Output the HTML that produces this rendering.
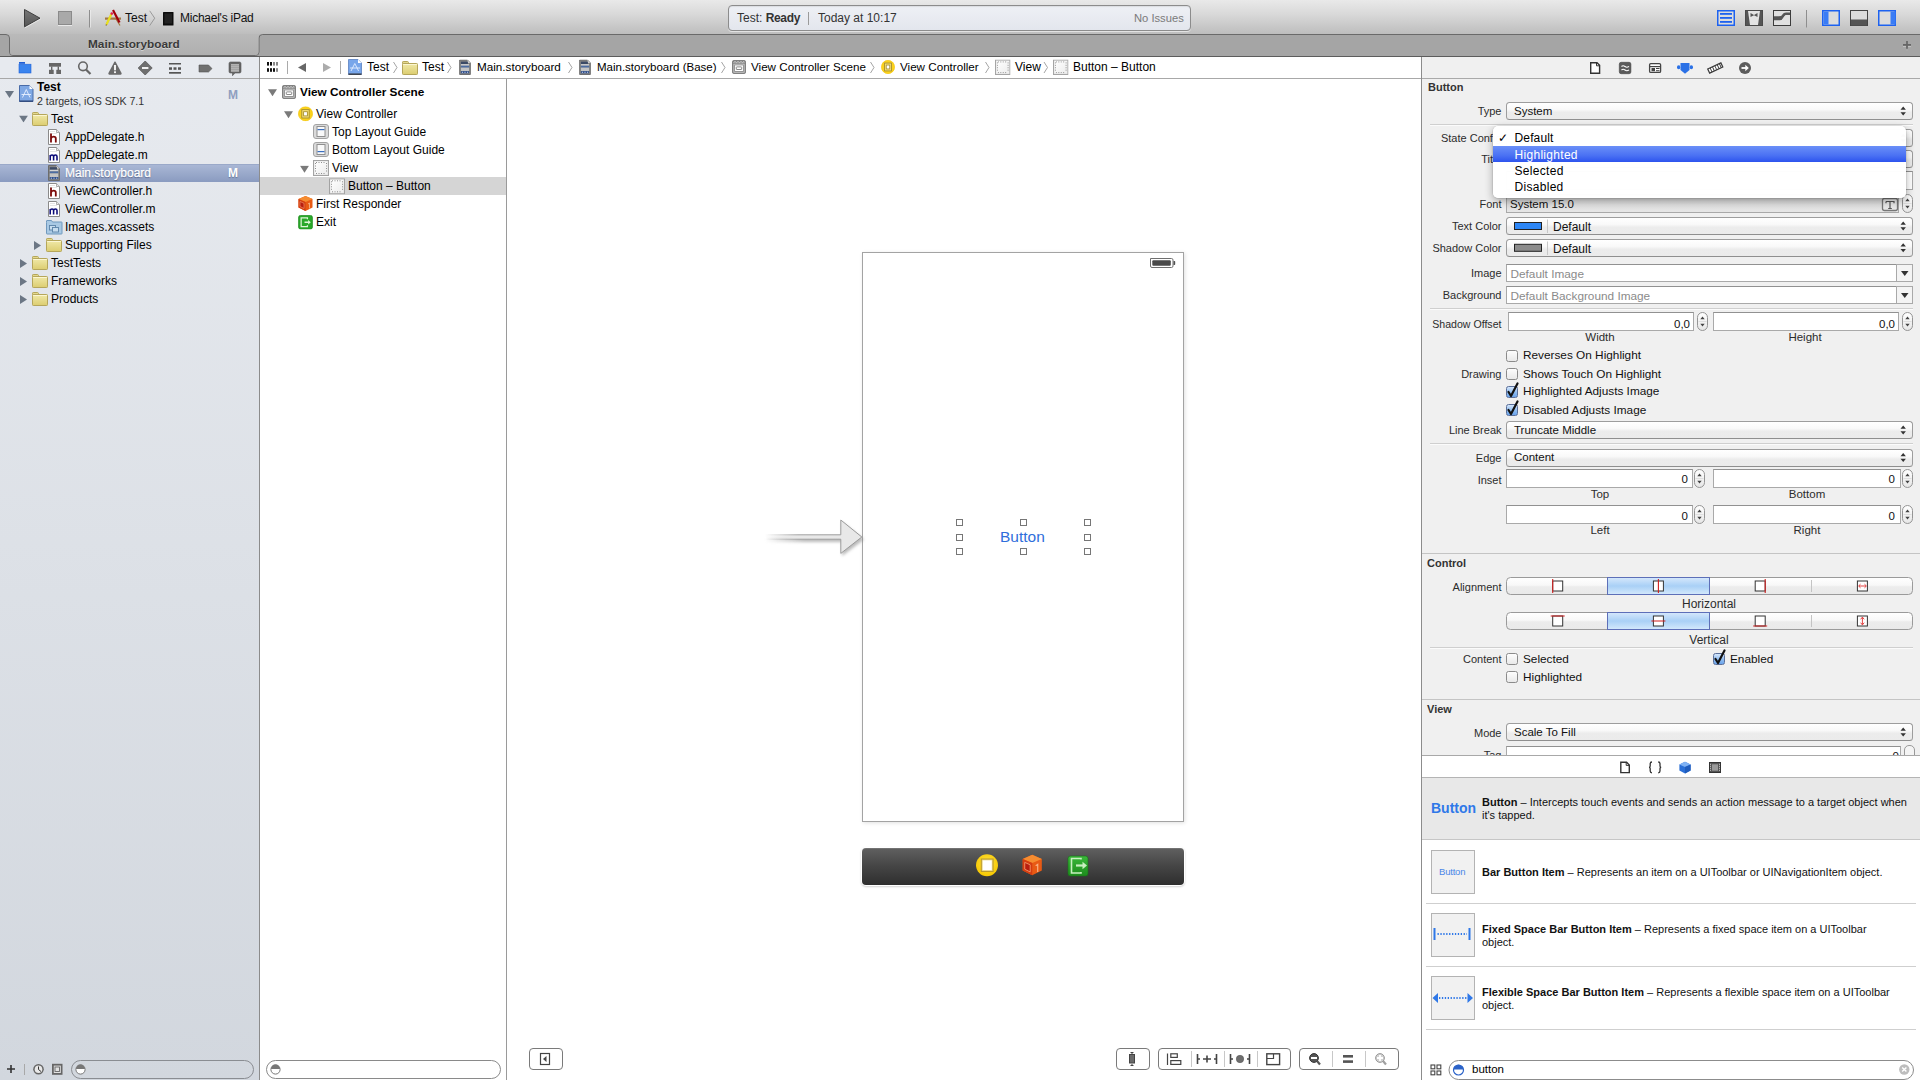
<!DOCTYPE html>
<html><head><meta charset="utf-8">
<style>
*{box-sizing:border-box;margin:0;padding:0}
html,body{width:1920px;height:1080px;overflow:hidden;background:#fff;font-family:"Liberation Sans",sans-serif;color:#000}
.a{position:absolute}
.t{position:absolute;white-space:nowrap;font-size:12px;line-height:12px}
.b{font-weight:bold}
#toolbar{left:0;top:0;width:1920px;height:35px;background:linear-gradient(#e9e9e9,#d9d9d9 40%,#bcbcbc)}
#tabbar{display:none}
#nav{left:0;top:57px;width:259px;height:1023px;background:linear-gradient(#e7eaef,#d2d7de)}
#navbar{left:0;top:57px;width:259px;height:22px;border-bottom:1px solid #a8a8a8;background:#e7eaef}
#vd1{left:259px;top:57px;width:1px;height:1023px;background:#8c8c8c}
#outline{left:260px;top:57px;width:246px;height:1023px;background:#fff}
#vd2{left:506px;top:79px;width:1px;height:1001px;background:#9a9a9a}
#jump{left:260px;top:57px;width:1161px;height:22px;background:#fff;border-bottom:1px solid #a8a8a8}
#canvas{left:507px;top:79px;width:914px;height:1001px;background:#fff}
#vd3{left:1421px;top:57px;width:1px;height:1023px;background:#8c8c8c}
#insp{left:1422px;top:57px;width:498px;height:1023px;background:#f0f0f0}

.lb{position:absolute;left:1422px;width:79.5px;text-align:right;white-space:nowrap;font-size:11px;line-height:11px;color:#2c2c2c;margin-top:.8px}
.pop{position:absolute;left:1506px;width:407px;height:18px;border:1px solid #9d9d9d;border-bottom-color:#8f8f8f;border-radius:3.5px;background:linear-gradient(#fff,#f9f9f9 40%,#ececec 58%,#ebebeb)}
.pt{position:absolute;white-space:nowrap;font-size:11.5px;line-height:11px;color:#111;margin-top:.6px}
.fld{position:absolute;background:#fff;border:1px solid #a9a9a9;border-top-color:#919191}
.ctr{position:absolute;text-align:center;white-space:nowrap;font-size:11.5px;line-height:11px;color:#2c2c2c}
.chk{position:absolute;width:12px;height:12px;border:1px solid #8b8b8b;border-radius:2.5px;background:linear-gradient(#fdfdfd,#e9e9e9)}
.chk.on{background:linear-gradient(#d4e6fb,#8fbcf0 55%,#6aa3ea);border-color:#5a6f9a}
.ct{position:absolute;white-space:nowrap;font-size:11.8px;line-height:12px;color:#111}
.hr{position:absolute;left:1430px;width:483px;height:2px;border-top:1px solid #cfcfcf;border-bottom:1px solid #fbfbfb}
.lt{position:absolute;white-space:nowrap;font-size:11px;line-height:13px;color:#111}
</style></head>
<body>

<svg width="0" height="0" style="position:absolute">
 <defs>
  <linearGradient id="fold" x1="0" y1="0" x2="0" y2="1"><stop offset="0" stop-color="#f0e9a8"/><stop offset="1" stop-color="#dccd70"/></linearGradient>
  <symbol id="folder" viewBox="0 0 16 14">
   <path d="M0.5 2.5 L0.5 1.2 Q0.5 0.5 1.2 0.5 L5.5 0.5 Q6.3 0.5 6.5 1.5 L6.7 2.5 Z" fill="#e4d98c" stroke="#b5a65a" stroke-width="1"/>
   <rect x="0.5" y="2.5" width="15" height="11" rx="0.8" fill="url(#fold)" stroke="#b5a65a" stroke-width="1"/>
   <line x1="1.2" y1="3.5" x2="14.8" y2="3.5" stroke="#fbf6d2" stroke-width="1"/>
  </symbol>
  <symbol id="doc" viewBox="0 0 12 16">
   <path d="M0.5 0.5 L8.5 0.5 L11.5 3.5 L11.5 15.5 L0.5 15.5 Z" fill="#fff" stroke="#8a8a8a" stroke-width="1"/>
   <path d="M8.5 0.5 L8.5 3.5 L11.5 3.5" fill="#e8e8e8" stroke="#9a9a9a" stroke-width=".8"/>
   <line x1="2" y1="2.5" x2="7" y2="2.5" stroke="#e4e4e4"/>
   <line x1="2" y1="4.5" x2="9" y2="4.5" stroke="#e4e4e4"/>
  </symbol>
  <symbol id="hdoc" viewBox="0 0 12 16">
   <use href="#doc" width="12" height="16"/>
   <path d="M3 4.5 L3 13.5 M3 9.5 Q3.5 7.6 5.6 7.6 Q7.8 7.6 7.8 9.5 L7.8 13.5" fill="none" stroke="#7c0a0a" stroke-width="1.8"/>
  </symbol>
  <symbol id="mdoc" viewBox="0 0 12 16">
   <use href="#doc" width="12" height="16"/>
   <path d="M2.2 8 L2.2 13.5 M2.2 9.6 Q2.6 8 4 8 Q5.6 8 5.6 9.6 L5.6 13.5 M5.6 9.6 Q6 8 7.4 8 Q9 8 9 9.6 L9 13.5" fill="none" stroke="#0a0a78" stroke-width="1.55"/>
  </symbol>
  <symbol id="sbdoc" viewBox="0 0 12 16">
   <path d="M0.5 0.5 L8.5 0.5 L11.5 3.5 L11.5 15.5 L0.5 15.5 Z" fill="#858585" stroke="#6c6c6c" stroke-width="1"/>
   <path d="M8.5 0.5 L8.5 3.5 L11.5 3.5 Z" fill="#d0d0d0"/>
   <rect x="1.8" y="2.2" width="7.2" height="2.6" fill="#3c4a66"/>
   <rect x="1.8" y="4.8" width="8.4" height="1.6" fill="#d4d4d4"/>
   <rect x="1.8" y="6.4" width="8.4" height="2" fill="#4c6ca2"/>
   <rect x="1.8" y="8.4" width="8.4" height="3.6" fill="#c4c4c4"/>
   <rect x="1.8" y="12" width="8.4" height="2.2" fill="#2f4f8e"/>
   <rect x="2.8" y="12.7" width="1" height=".9" fill="#fff"/><rect x="5.5" y="12.7" width="1" height=".9" fill="#fff"/><rect x="8.2" y="12.7" width="1" height=".9" fill="#fff"/>
  </symbol>
  <symbol id="tridown" viewBox="0 0 9 7"><path d="M0 0 L9 0 L4.5 7 Z" fill="#6b7684"/></symbol>
  <symbol id="triright" viewBox="0 0 7 9"><path d="M0 0 L7 4.5 L0 9 Z" fill="#6b7684"/></symbol>
  <symbol id="tridowng" viewBox="0 0 9 7"><path d="M0 0 L9 0 L4.5 7 Z" fill="#7a7a7a"/></symbol>

  <linearGradient id="vgrad" x1="0" y1="0" x2="1" y2="1"><stop offset="0" stop-color="#fff"/><stop offset="1" stop-color="#ececec"/></linearGradient>
  <symbol id="viewicon" viewBox="0 0 16 16">
   <rect x="0.5" y="0.5" width="15" height="15" fill="#e2e2e2" stroke="#a3a3a3" stroke-width="1"/>
   <rect x="1.5" y="1.5" width="13" height="13" fill="url(#vgrad)"/>
   <path d="M3 2.5 L13 2.5 M3 13.5 L13 13.5 M2.5 3 L2.5 13 M13.5 3 L13.5 13" fill="none" stroke="#8e8e8e" stroke-width="1" stroke-dasharray="1 1.5"/>
  </symbol>
  <symbol id="guide" viewBox="0 0 16 15">
   <rect x="0.5" y="0.5" width="15" height="14" rx="2.5" fill="#dadada" stroke="#a3a3a3" stroke-width="1"/>
   <rect x="4" y="2.5" width="8" height="10" fill="#f9f9f9" stroke="#8f8f8f" stroke-width="1"/>
  </symbol>
  <symbol id="vcicon" viewBox="0 0 15 15">
   <circle cx="7.5" cy="7.5" r="7.1" fill="#fbd21c" stroke="#f2c200" stroke-width=".6"/>
   <rect x="3.8" y="3.3" width="7.4" height="8.4" fill="#f7e27a" stroke="#a89130" stroke-width="1"/>
   <rect x="5.6" y="5.4" width="3.8" height="4.2" fill="#fff" stroke="#a89130" stroke-width=".9"/>
  </symbol>
  <symbol id="cube" viewBox="0 0 15 16">
   <path d="M7.5 0.5 L14.5 3.5 L14.5 12 L7.5 15.5 L0.5 12 L0.5 3.5 Z" fill="#e85a14"/>
   <path d="M0.5 3.5 L7.5 6.5 L14.5 3.5 L7.5 0.5 Z" fill="#f58c30"/>
   <path d="M0.5 3.5 L7.5 6.5 L7.5 15.5 L0.5 12 Z" fill="#d43c10"/>
   <path d="M2 6 L6 7.8 L6 13 L2 11 Z" fill="#b81e10" stroke="#f6a070" stroke-width=".6"/>
   <path d="M10 8.5 L11.5 7.5 L11.5 13" fill="none" stroke="#f9b080" stroke-width=".9"/>
  </symbol>
  <symbol id="exiticon" viewBox="0 0 15 15">
   <rect x="0.4" y="0.4" width="14.2" height="14.2" rx="2" fill="#2aa82a" stroke="#1a8a1a" stroke-width=".8"/>
   <path d="M9.5 4.3 L9.5 3 L3 3 L3 12 L9.5 12 L9.5 10.7" fill="none" stroke="#dff5d8" stroke-width="1.3"/>
   <path d="M6.5 7.5 L11 7.5" stroke="#dff5d8" stroke-width="1.3"/>
   <path d="M10.2 5.3 L13 7.5 L10.2 9.7 Z" fill="#dff5d8"/>
  </symbol>
  <symbol id="sceneicon" viewBox="0 0 14 14">
   <rect x="0.5" y="0.5" width="13" height="13" rx="1.2" fill="#858585" stroke="#707070" stroke-width=".8"/>
   <path d="M1.5 2.6 L3 1.6 L4.5 2.6 L6 1.6 L7.5 2.6 L9 1.6 L10.5 2.6 L12 1.6 L12.5 2.4" fill="none" stroke="#f0f0f0" stroke-width=".7"/>
   <rect x="1.5" y="3.8" width="11" height="8.8" fill="#d9d9d9"/>
   <rect x="2.6" y="4.9" width="8.8" height="6.6" fill="#fff" stroke="#8a8a8a" stroke-width=".9"/>
   <rect x="4.3" y="6.9" width="5.4" height="2.6" rx=".5" fill="#fff" stroke="#7d7d7d" stroke-width=".9"/>
  </symbol>
 </defs>
</svg>
<div id="toolbar" class="a"></div>
<div id="tabbar" class="a"></div>

<!-- TOOLBAR CONTENT -->
<svg class="a" style="left:0;top:0" width="300" height="34">
 <defs><linearGradient id="pg" x1="0" y1="0" x2="0" y2="1"><stop offset="0" stop-color="#777"/><stop offset="1" stop-color="#555"/></linearGradient></defs>
 <path d="M24.5 9.5 L40 18.2 L24.5 26.8 Z" fill="url(#pg)" stroke="#3e3e3e" stroke-width="1"/>
 <path d="M25 27.8 L40.5 19" stroke="#fff" stroke-opacity=".5" stroke-width="1"/>
 <rect x="58.5" y="11.5" width="13" height="13" fill="#a9a9a9" stroke="#8a8a8a" stroke-width="1"/>
 <line x1="58" y1="25.5" x2="72" y2="25.5" stroke="#fff" stroke-opacity=".6"/>
 <line x1="89.5" y1="10" x2="89.5" y2="27.5" stroke="#8e8e8e"/>
 <line x1="90.5" y1="10" x2="90.5" y2="27.5" stroke="#f4f4f4" stroke-opacity=".6"/>
 <!-- xcode icon -->
 <rect x="105" y="17.5" width="16" height="2.2" fill="#a37841"/>
 <path d="M106 25.5 L112 13" stroke="#7a5a30" stroke-width="1.2"/>
 <path d="M120 25.5 L116 19" stroke="#a37841" stroke-width="1.2"/>
 <path d="M106.5 24.5 L111.5 13.8" stroke="#e8e020" stroke-width="2.2"/>
 <circle cx="111.8" cy="13.6" r="1.3" fill="#e02050"/>
 <path d="M113 10 L119.5 22.5" stroke="#a0000a" stroke-width="2.2"/>
 <!-- chevron -->
 <path d="M149.7 10.8 L154.7 18.2 L149.7 25.6" fill="none" stroke="#8a8a8a" stroke-width=".8"/>
 <!-- ipad -->
 <rect x="163" y="12" width="10.5" height="13.5" rx="0.5" fill="#0c0c0c"/>
 <rect x="164.5" y="13.5" width="7.5" height="10" fill="#222"/>
</svg>
<div class="t" style="left:125px;top:12px;color:#111">Test</div>
<div class="t" style="left:180px;top:12px;color:#111;letter-spacing:-.25px">Michael's iPad</div>
<!-- activity viewer -->
<div class="a" style="left:728px;top:5px;width:463px;height:26px;border:1px solid #8c8c8c;border-radius:4px;background:linear-gradient(#eef0f5,#e3e6ed);box-shadow:0 1px 0 rgba(255,255,255,.55), inset 0 1px 1px rgba(0,0,0,.08)"></div>
<div class="t" style="left:737px;top:12px;color:#333">Test: <span class="b" style="letter-spacing:-.35px">Ready</span></div>
<div class="a" style="left:808px;top:12px;width:1px;height:13px;background:#9a9a9a"></div>
<div class="t" style="left:818px;top:12px;color:#333">Today at 10:17</div>
<div class="t" style="left:1134px;top:12px;color:#7a7a7a;font-size:11.2px">No Issues</div>
<svg class="a" style="left:1700px;top:0" width="220" height="34">
 <rect x="17.75" y="10.75" width="16.5" height="14.5" fill="#dcdcdc" stroke="#1d62f0" stroke-width="1.5"/>
 <rect x="20" y="13" width="12" height="1.8" fill="#1d62f0"/>
 <rect x="20" y="17" width="12" height="1.8" fill="#1d62f0"/>
 <rect x="20" y="21" width="12" height="1.8" fill="#1d62f0"/>
 <rect x="45.5" y="10.5" width="17" height="15" fill="#555" stroke="#4a4a4a"/>
 <path d="M48 11 L60 11 L58 25 L50 25 Z" fill="#e4e4e4"/>
 <path d="M50.5 13 L54 15 L57.5 13 L57.5 17 L54 15.2 L50.5 17 Z" fill="#555"/>
 <rect x="73.5" y="10.5" width="17" height="15" fill="#e0e0e0" stroke="#3c3c3c"/>
 <path d="M74 17 L79 17 Q82 17 83 15 Q84 13.3 86 13.3 L90 13.3 L90 15 L86.5 15 Q85 15 84 17 Q82 20.5 80 20.5 L74 20.5 Z" fill="#555"/>
 <path d="M74 20.5 L80 20.5 Q82 20.5 84 17 Q85 15 86.5 15 L90 15 L90 25 L74 25 Z" fill="#e0e0e0"/>
 <path d="M74 17 L79 17 Q82 17 83 15 Q84 13.3 86 13.3 L90 13.3" fill="none" stroke="#555" stroke-width="1.6"/>
 <path d="M74 21 L80 21 Q82 21 84 17.5 Q85 15.5 86.5 15.5" fill="none"/>
 <line x1="106.5" y1="10" x2="106.5" y2="27.5" stroke="#8e8e8e"/>
 <rect x="122.75" y="10.75" width="16.5" height="14.5" fill="#dcdcdc" stroke="#1d62f0" stroke-width="1.5"/>
 <rect x="123.5" y="11.5" width="5" height="13" fill="#3a7cf5"/>
 <rect x="150.5" y="10.5" width="17" height="15" fill="#dcdcdc" stroke="#444"/>
 <rect x="151" y="19.5" width="16" height="6" fill="#555"/>
 <rect x="178.75" y="10.75" width="16.5" height="14.5" fill="#dcdcdc" stroke="#1d62f0" stroke-width="1.5"/>
 <rect x="190.5" y="11.5" width="5" height="13" fill="#3a7cf5"/>
</svg>
<!-- TAB BAR CONTENT -->
<svg class="a" style="left:0;top:34px" width="1920" height="23">
 <defs><linearGradient id="atab" x1="0" y1="0" x2="0" y2="1"><stop offset="0" stop-color="#bababa"/><stop offset="1" stop-color="#afafaf"/></linearGradient></defs>
 <path d="M0 0 L0 22 L1920 22 L1920 0 Z" fill="#a5a5a5"/>
 <path d="M-1 0.5 L6 0.5 Q9.5 0.5 9.5 4 L9.5 18 Q9.5 21.5 13 21.5 L255.5 21.5 Q259 21.5 259 18 L259 4 Q259 0.5 262.5 0.5 L1921 0.5" fill="none" stroke="#6a6a6a" stroke-width="1"/>
 <path d="M6 0 Q10 0 10 4 L10 18 Q10 21 13 21 L255.5 21 Q258.5 21 258.5 18 L258.5 4 Q258.5 0 262.5 0 Z" fill="url(#atab)"/>
 <line x1="0" y1="22.5" x2="1920" y2="22.5" stroke="#5c5c5c"/>
 <path d="M1907 7 L1907 14.8 M1903 10.9 L1911 10.9" stroke="#666" stroke-width="1.7"/><path d="M1903 12.6 L1906 12.6 M1908 12.6 L1911 12.6 M1907 15.8 L1907 16.3" stroke="#fff" stroke-opacity=".35" stroke-width="1"/>
</svg>
<div class="t b" style="left:88px;top:38px;color:#3a3a3a;font-size:11.8px;text-shadow:0 1px 0 rgba(255,255,255,.45)">Main.storyboard</div>
<div id="nav" class="a"></div>
<div id="navbar" class="a"></div>

<!-- NAV BAR ICONS -->
<svg class="a" style="left:0;top:57px" width="259" height="21">
 <rect x="19" y="5" width="6" height="1.8" fill="#1e5fd6"/>
 <rect x="19" y="7.2" width="12" height="8.8" fill="#3a84ee" stroke="#1e62d8" stroke-width=".6"/>
 <rect x="49" y="6" width="12" height="3.7" fill="#666"/>
 <rect x="51" y="9.5" width="1.4" height="3.5" fill="#666"/><rect x="57.6" y="9.5" width="1.4" height="3.5" fill="#666"/>
 <rect x="49" y="12.8" width="4.7" height="4.2" fill="#666"/><rect x="56.3" y="12.8" width="4.7" height="4.2" fill="#666"/>
 <circle cx="83" cy="9.3" r="4.3" fill="none" stroke="#666" stroke-width="1.6"/>
 <path d="M86 12.5 L90.5 17" stroke="#666" stroke-width="2.2"/>
 <path d="M115 4.5 Q114.7 4.3 114.4 4.7 L108.3 16.3 Q108.2 17.6 109.3 17.8 L120.7 17.8 Q121.8 17.6 121.7 16.3 L115.6 4.7 Q115.3 4.3 115 4.5 Z" fill="#6a6a6a"/>
 <rect x="114.1" y="8" width="1.8" height="5.3" fill="#fff"/><rect x="114.1" y="14.3" width="1.8" height="1.8" fill="#fff"/>
 <path d="M145.2 4 L152.2 11 L145.2 18 L138.2 11 Z" fill="#6f6f6f" stroke="#5a5a5a" stroke-width=".8" stroke-linejoin="round"/>
 <rect x="142" y="10.1" width="6.4" height="1.8" fill="#fff"/>
 <rect x="169" y="6" width="12" height="1.5" fill="#555"/>
 <rect x="169" y="10.3" width="3" height="2.5" fill="#555"/><rect x="173.5" y="10.3" width="3" height="2.5" fill="#555"/><rect x="178" y="10.3" width="3" height="2.5" fill="#555"/>
 <rect x="169" y="15" width="12" height="1.7" fill="#555"/>
 <path d="M199 8 L208.5 8 L212 11.6 L208.5 15 L199 15 Z" fill="#707070" stroke="#555" stroke-width=".6"/>
 <path d="M230.5 5 L239.5 5 Q241 5 241 6.5 L241 14.5 Q241 16 239.5 16 L235 16 L232.5 18.7 L232.5 16 L230.5 16 Q229 16 229 14.5 L229 6.5 Q229 5 230.5 5 Z" fill="#666" stroke="#555" stroke-width=".6"/>
 <rect x="231" y="7.5" width="8" height=".9" fill="#fff"/><rect x="231" y="9.5" width="8" height=".9" fill="#fff"/><rect x="231" y="11.5" width="8" height=".9" fill="#fff"/><rect x="231" y="13.5" width="8" height=".9" fill="#fff"/>
</svg>
<!-- NAV TREE -->
<div class="a" style="left:0;top:164px;width:259px;height:18px;background:linear-gradient(#a9b7d5,#8a9bc0);border-top:1px solid #9aa9c9"></div>
<svg class="a" style="left:0;top:79px" width="259" height="240">
 <use href="#tridown" x="5" y="12" width="9" height="7"/>
 <path d="M19.5 6.5 L29.5 6.5 L33 10 L33 22.5 L19.5 22.5 Z" fill="#7fa8e4" stroke="#4a6ca8" stroke-width="1"/>
 <path d="M29.5 6.5 L29.5 10 L33 10 Z" fill="#fff"/>
 <rect x="19.5" y="21.5" width="13.5" height="1.2" fill="#2a4070"/>
 <path d="M22.5 18.5 L26.3 10.5 L30 18.5 M21.5 15.5 L31 15.5" stroke="#e8f0ff" stroke-width=".9" fill="none"/>
 <use href="#tridown" x="19" y="36.5" width="9" height="7"/>
 <use href="#folder" x="32" y="33" width="16" height="14"/>
 <use href="#hdoc" x="48" y="50" width="12" height="16"/>
 <use href="#mdoc" x="48" y="68" width="12" height="16"/>
 <use href="#sbdoc" x="48" y="86" width="12" height="16"/>
 <use href="#hdoc" x="48" y="104" width="12" height="16"/>
 <use href="#mdoc" x="48" y="122" width="12" height="16"/>
 <path d="M46.5 143.5 L46.5 142 Q46.5 141.5 47 141.5 L51.5 141.5 L52.5 143 L61.5 143 Q62 143 62 143.5 L62 154.5 Q62 155 61.5 155 L47 155 Q46.5 155 46.5 154.5 Z" fill="#a9c9e4" stroke="#6f98bd" stroke-width="1"/>
 <rect x="49.5" y="146.5" width="6" height="4.5" fill="#c7ddef" stroke="#5b83a8" stroke-width=".9"/>
 <rect x="52.5" y="148.5" width="6" height="4.5" fill="#c7ddef" stroke="#5b83a8" stroke-width=".9"/>
 <use href="#triright" x="34" y="162" width="7" height="9"/>
 <use href="#folder" x="46" y="159" width="16" height="14"/>
 <use href="#triright" x="20" y="180" width="7" height="9"/>
 <use href="#folder" x="32" y="177" width="16" height="14"/>
 <use href="#triright" x="20" y="198" width="7" height="9"/>
 <use href="#folder" x="32" y="195" width="16" height="14"/>
 <use href="#triright" x="20" y="216" width="7" height="9"/>
 <use href="#folder" x="32" y="213" width="16" height="14"/>
</svg>
<div class="t b" style="left:37px;top:81px;font-size:12px">Test</div>
<div class="t" style="left:37px;top:95px;font-size:10.6px;color:#333">2 targets, iOS SDK 7.1</div>
<div class="t b" style="left:228px;top:89px;font-size:12px;color:#8f9fc0">M</div>
<div class="t" style="left:51px;top:113px">Test</div>
<div class="t" style="left:65px;top:131px">AppDelegate.h</div>
<div class="t" style="left:65px;top:149px">AppDelegate.m</div>
<div class="t" style="left:65px;top:167px;color:#fff;text-shadow:0 1px 1px rgba(30,40,80,.6);-webkit-text-stroke:.25px #fff">Main.storyboard</div>
<div class="t b" style="left:228px;top:167px;font-size:12px;color:#fff;text-shadow:0 1px 1px rgba(40,50,80,.4)">M</div>
<div class="t" style="left:65px;top:185px">ViewController.h</div>
<div class="t" style="left:65px;top:203px">ViewController.m</div>
<div class="t" style="left:65px;top:221px">Images.xcassets</div>
<div class="t" style="left:65px;top:239px">Supporting Files</div>
<div class="t" style="left:51px;top:257px">TestTests</div>
<div class="t" style="left:51px;top:275px">Frameworks</div>
<div class="t" style="left:51px;top:293px">Products</div>
<div id="vd1" class="a"></div>
<div id="outline" class="a"></div>
<div id="jump" class="a"></div>

<!-- OUTLINE -->
<div class="a" style="left:260px;top:177px;width:246px;height:18px;background:#d5d5d5"></div>
<svg class="a" style="left:260px;top:79px" width="246" height="160">
 <use href="#tridowng" x="8" y="10" width="9" height="7.5"/>
 <use href="#sceneicon" x="22" y="6" width="14" height="14"/>
 <use href="#tridowng" x="24" y="32" width="9" height="7.5"/>
 <use href="#vcicon" x="38" y="27.3" width="15" height="15"/>
 <use href="#guide" x="53" y="45" width="16" height="15"/>
 <rect x="57.5" y="50" width="7" height="1.2" fill="#3a6fc0"/>
 <use href="#guide" x="53" y="63" width="16" height="15"/>
 <rect x="57.5" y="72" width="7" height="1.2" fill="#3a6fc0"/>
 <use href="#tridowng" x="40" y="86.5" width="9" height="7.5"/>
 <use href="#viewicon" x="53" y="81" width="16" height="16"/>
 <use href="#viewicon" x="69" y="99.3" width="16" height="16"/>
 <use href="#cube" x="38" y="116.5" width="15" height="16"/>
 <use href="#exiticon" x="38" y="136" width="15" height="14.5"/>
</svg>
<div class="t b" style="left:300px;top:86px;font-size:11.8px">View Controller Scene</div>
<div class="t" style="left:316px;top:108px">View Controller</div>
<div class="t" style="left:332px;top:126px">Top Layout Guide</div>
<div class="t" style="left:332px;top:144px">Bottom Layout Guide</div>
<div class="t" style="left:332px;top:162px">View</div>
<div class="t" style="left:348px;top:180px">Button – Button</div>
<div class="t" style="left:316px;top:198px">First Responder</div>
<div class="t" style="left:316px;top:216px">Exit</div>
<div id="vd2" class="a"></div>

<!-- JUMP BAR -->
<svg class="a" style="left:260px;top:57px" width="1161" height="21">
 <g transform="translate(-260,-57)">
 <rect x="267" y="62" width="2" height="3.6" fill="#111"/><rect x="270" y="62" width="2" height="3.6" fill="#111"/><rect x="273" y="62" width="2" height="3.6" fill="#888"/><rect x="276" y="62" width="2" height="3.6" fill="#888"/>
 <rect x="267" y="68.2" width="2" height="3.6" fill="#111"/><rect x="270" y="68.2" width="2" height="3.6" fill="#111"/><rect x="273" y="68.2" width="2" height="3.6" fill="#111"/><rect x="276" y="68.2" width="2" height="3.6" fill="#888"/>
 <line x1="287.5" y1="61" x2="287.5" y2="74" stroke="#aaa"/>
 <path d="M306 63 L306 72 L298 67.5 Z" fill="#676767"/>
 <path d="M323 63 L323 72 L331 67.5 Z" fill="#acacac"/>
 <line x1="340.5" y1="61" x2="340.5" y2="74" stroke="#aaa"/>
 <path d="M348.5 59.5 L358 59.5 L361.5 63 L361.5 74.5 L348.5 74.5 Z" fill="#78a6ea" stroke="#5a80c0" stroke-width=".8"/>
 <path d="M358 59.5 L358 63 L361.5 63 Z" fill="#fff"/>
 <rect x="348.5" y="73.5" width="13" height="1.3" fill="#333"/>
 <path d="M351 71 L354.8 63.5 L358.6 71 M350 68 L360 68" stroke="#e4eeff" stroke-width=".9" fill="none"/>
 <path d="M393.5 62 L397 67.5 L393.5 73" fill="none" stroke="#9a9a9a" stroke-width=".9"/>
 <use href="#folder" x="402" y="61" width="16" height="14"/>
 <path d="M447.5 62 L451 67.5 L447.5 73" fill="none" stroke="#9a9a9a" stroke-width=".9"/>
 <use href="#sbdoc" x="459" y="59.5" width="12" height="15.5"/>
 <path d="M568.5 62 L572 67.5 L568.5 73" fill="none" stroke="#9a9a9a" stroke-width=".9"/>
 <use href="#sbdoc" x="579" y="59.5" width="12" height="15.5"/>
 <path d="M721.5 62 L725 67.5 L721.5 73" fill="none" stroke="#9a9a9a" stroke-width=".9"/>
 <use href="#sceneicon" x="732" y="60" width="14" height="14"/>
 <path d="M870.5 62 L874 67.5 L870.5 73" fill="none" stroke="#9a9a9a" stroke-width=".9"/>
 <use href="#vcicon" x="881" y="60" width="14" height="14"/>
 <path d="M985.5 62 L989 67.5 L985.5 73" fill="none" stroke="#9a9a9a" stroke-width=".9"/>
 <use href="#viewicon" x="995" y="59.5" width="15.5" height="15.5"/>
 <path d="M1044 62 L1047.5 67.5 L1044 73" fill="none" stroke="#9a9a9a" stroke-width=".9"/>
 <use href="#viewicon" x="1053" y="59.5" width="15.5" height="15.5"/>
 </g>
</svg>
<div class="t" style="left:367px;top:61px">Test</div>
<div class="t" style="left:422px;top:61px">Test</div>
<div class="t" style="left:477px;top:61px;font-size:11.7px">Main.storyboard</div>
<div class="t" style="left:597px;top:61px;font-size:11.5px">Main.storyboard (Base)</div>
<div class="t" style="left:751px;top:61px;font-size:11.65px">View Controller Scene</div>
<div class="t" style="left:900px;top:61px;font-size:11.65px">View Controller</div>
<div class="t" style="left:1015px;top:61px">View</div>
<div class="t" style="left:1073px;top:61px">Button – Button</div>

<div id="canvas" class="a"></div>

<!-- CANVAS -->
<div class="a" style="left:862px;top:252px;width:322px;height:570px;background:#fff;border:1px solid #a3a3a3;box-shadow:1px 1px 4px rgba(0,0,0,.12)"></div>
<svg class="a" style="left:740px;top:240px" width="460" height="340">
 <defs>
  <linearGradient id="shaft" x1="0" y1="0" x2="1" y2="0"><stop offset="0" stop-color="#999" stop-opacity="0"/><stop offset=".35" stop-color="#999" stop-opacity=".9"/><stop offset="1" stop-color="#999"/></linearGradient>
  <linearGradient id="shaftf" x1="0" y1="0" x2="1" y2="0"><stop offset="0" stop-color="#e8e8e8" stop-opacity="0"/><stop offset=".3" stop-color="#e8e8e8"/><stop offset="1" stop-color="#e8e8e8"/></linearGradient>
  <linearGradient id="shadg" x1="765" y1="0" x2="865" y2="0" gradientUnits="userSpaceOnUse"><stop offset="0" stop-color="#777" stop-opacity="0"/><stop offset=".4" stop-color="#777"/><stop offset="1" stop-color="#777"/></linearGradient>
  <filter id="blur1" x="-20%" y="-50%" width="140%" height="200%"><feGaussianBlur stdDeviation="1.6"/></filter>
 </defs>
 <g transform="translate(-740,-240)">
  <path d="M1150.5 258.5 L1171.5 258.5 Q1173 258.5 1173 260 L1173 266 Q1173 267.5 1171.5 267.5 L1152 267.5 Q1150.5 267.5 1150.5 266 Z" fill="#fff" stroke="#6f6f6f" stroke-width="1"/>
  <rect x="1152.3" y="260.3" width="18.5" height="5.4" rx="1" fill="#4a4a4a"/>
  <path d="M1173.5 261 L1174.5 261 Q1175.2 261 1175.2 261.8 L1175.2 264.3 Q1175.2 265 1174.5 265 L1173.5 265 Z" fill="#505050"/>
  <g filter="url(#blur1)" opacity=".5">
   <path d="M766 537 L842 537 L842 522 L864 539.5 L842 556 L842 542 L766 542 Z" fill="url(#shadg)"/>
  </g>
  <path d="M765 534.8 L840.8 534.8 L840.8 520 L861.8 537 L840.8 553.4 L840.8 539.2 L765 539.2 Z" fill="url(#shaftf)"/>
  <path d="M765 534.8 L840.8 534.8 L840.8 520 L861.8 537 L840.8 553.4 L840.8 539.2 L765 539.2" fill="none" stroke="url(#shaft)" stroke-width="1"/>
  <g fill="#fff" stroke="#767676" stroke-width="1">
   <rect x="956.5" y="519.5" width="6" height="6"/><rect x="1020.5" y="519.5" width="6" height="6"/><rect x="1084.5" y="519.5" width="6" height="6"/>
   <rect x="956.5" y="534.5" width="6" height="6"/><rect x="1084.5" y="534.5" width="6" height="6"/>
   <rect x="956.5" y="548.5" width="6" height="6"/><rect x="1020.5" y="548.5" width="6" height="6"/><rect x="1084.5" y="548.5" width="6" height="6"/>
  </g>
 </g>
</svg>
<div class="t" style="left:1000px;top:529px;font-size:15.5px;line-height:15px;color:#2f6edb">Button</div>
<!-- dock -->
<div class="a" style="left:861px;top:847px;width:324px;height:39px;border-radius:5px;background:#fff;box-shadow:0 1px 2px rgba(0,0,0,.18)"></div>
<div class="a" style="left:862px;top:848px;width:322px;height:37px;border-radius:4px;background:linear-gradient(#606060,#474747 45%,#2e2e2e);box-shadow:inset 0 1px 0 rgba(255,255,255,.12)"></div>
<svg class="a" style="left:970px;top:850px" width="125" height="32">
 <defs><radialGradient id="yel" cx=".5" cy=".4" r=".6"><stop offset="0" stop-color="#ffe040"/><stop offset="1" stop-color="#f6c800"/></radialGradient>
 <linearGradient id="grn" x1="0" y1="0" x2="0" y2="1"><stop offset="0" stop-color="#3ab83a"/><stop offset="1" stop-color="#1d8c1d"/></linearGradient></defs>
 <circle cx="17" cy="15.3" r="11" fill="url(#yel)"/>
 <rect x="11.3" y="9" width="11.8" height="12.5" fill="#e8d27a" stroke="#b89a30" stroke-width="1"/>
 <rect x="12.6" y="10.3" width="9.2" height="9.9" fill="#fff"/>
 <use href="#cube" x="52" y="3.8" width="20.5" height="22.6"/>
 <rect x="98" y="6" width="20" height="20" rx="2.5" fill="url(#grn)" stroke="#176f17" stroke-width=".6"/>
 <path d="M111 9.5 L111 8.5 L101.5 8.5 L101.5 23 L111 23 L111 22" fill="none" stroke="#c8efc0" stroke-width="1.6"/>
 <path d="M106 15.5 L113 15.5" stroke="#c8efc0" stroke-width="2.2"/>
 <path d="M112.5 11.8 L117 15.5 L112.5 19.2 Z" fill="#c8efc0"/>
</svg>
<!-- canvas bottom bar -->
<svg class="a" style="left:507px;top:1040px" width="914" height="40">
 <g transform="translate(-507,-1040)" fill="none" stroke="#7a7a7a" stroke-width="1">
  <rect x="529.5" y="1048.5" width="33" height="21" rx="3.5" fill="#fff"/>
  <rect x="540.5" y="1053.5" width="9" height="11" stroke="#444" stroke-width="1.2"/>
  <path d="M546.5 1056 L546.5 1062 L543 1059 Z" fill="#444" stroke="none"/>
  <rect x="1116.5" y="1048.5" width="33" height="21" rx="3.5" fill="#fff"/>
  <rect x="1129.5" y="1054.5" width="5" height="8.5" fill="#6a6a6a" stroke="#444"/>
  <path d="M1130 1052 L1134 1052 L1132 1054 Z M1130 1066 L1134 1066 L1132 1064 Z" fill="#444" stroke="none"/>
  <rect x="1158.5" y="1048.5" width="132" height="21" rx="3.5" fill="#fff"/>
  <path d="M1191.5 1051 L1191.5 1067 M1224.5 1051 L1224.5 1067 M1257.5 1051 L1257.5 1067" stroke="#c8c8c8"/>
  <path d="M1167.5 1053.5 L1167.5 1065" stroke="#444" stroke-width="1.2"/>
  <rect x="1170.8" y="1053.8" width="6.5" height="3.6" stroke="#444" stroke-width="1.2"/>
  <rect x="1170.8" y="1060.6" width="10" height="3.8" stroke="#444" stroke-width="1.2"/>
  <path d="M1197.5 1054 L1197.5 1064 M1216.5 1054 L1216.5 1064 M1197.5 1059 L1200 1059 M1203 1059 L1211 1059 M1214 1059 L1216.5 1059 M1207 1055.5 L1207 1062.5" stroke="#444" stroke-width="1.6"/>
  <path d="M1230.5 1054 L1230.5 1064 M1249.5 1054 L1249.5 1064 M1230.5 1059 L1233 1059 M1247 1059 L1249.5 1059" stroke="#444" stroke-width="1.6"/>
  <circle cx="1240" cy="1059" r="3.7" fill="#6e6e6e" stroke="#555" stroke-width=".6"/>
  <rect x="1266.8" y="1053.8" width="12.8" height="10.8" stroke="#444" stroke-width="1.4"/>
  <path d="M1267 1058.5 L1273.5 1058.5 L1273.5 1054" stroke="#444" stroke-width="1.2"/>
  <rect x="1299.5" y="1048.5" width="99" height="21" rx="3.5" fill="#fff"/>
  <path d="M1332.5 1051 L1332.5 1067 M1365.5 1051 L1365.5 1067" stroke="#c8c8c8"/>
  <circle cx="1314" cy="1058" r="4.4" fill="#555" stroke="#333" stroke-width="1"/>
  <rect x="1311" y="1057" width="6" height="2" fill="#fff" stroke="none"/>
  <path d="M1317 1061 L1320 1064.5" stroke="#555" stroke-width="2.2"/>
  <rect x="1343" y="1055" width="10" height="2.6" fill="#555" stroke="none"/>
  <rect x="1343" y="1060.3" width="10" height="2.6" fill="#555" stroke="none"/>
  <circle cx="1380" cy="1058" r="4.4" fill="#d0d0d0" stroke="#9a9a9a" stroke-width="1"/>
  <path d="M1377 1058 L1383 1058 M1380 1055 L1380 1061" stroke="#fff" stroke-width="1.8"/>
  <path d="M1383 1061 L1386 1064.5" stroke="#a0a0a0" stroke-width="2.2"/>
 </g>
</svg>
<!-- nav bottom bar -->
<svg class="a" style="left:0;top:1055px" width="506" height="25">
 <g transform="translate(0,-1055)">
  <path d="M11 1065 L11 1073 M7 1069 L15 1069" stroke="#333" stroke-width="1.6"/>
  <line x1="24.5" y1="1064" x2="24.5" y2="1075" stroke="#a8a8a8"/>
  <circle cx="38.5" cy="1069.2" r="5.3" fill="#666"/><circle cx="38.5" cy="1069.2" r="3.8" fill="#e8e8e8"/>
  <path d="M38.5 1066.5 L38.5 1069.5 L41 1071.5" stroke="#333" stroke-width="1" fill="none"/>
  <rect x="52" y="1063.8" width="10.5" height="11" fill="#666"/>
  <rect x="53.8" y="1065.6" width="7" height="7.4" fill="#e2e2e2"/>
  <rect x="55" y="1067" width="4.5" height="4.5" fill="none" stroke="#666" stroke-width=".9"/>
  <rect x="71.5" y="1060.5" width="182" height="18" rx="9" fill="none" stroke="#8a8d92" stroke-width="1"/>
  <circle cx="80.5" cy="1069.5" r="4.6" fill="#fff" stroke="#777" stroke-width="1"/>
  <path d="M76 1069 A4.5 4.5 0 0 1 85 1069 Z" fill="#777"/>
  <rect x="266.5" y="1060.5" width="234" height="18" rx="9" fill="#fff" stroke="#8a8a8a" stroke-width="1"/>
  <circle cx="275.5" cy="1069.5" r="4.6" fill="#fff" stroke="#777" stroke-width="1"/>
  <path d="M271 1069 A4.5 4.5 0 0 1 280 1069 Z" fill="#777"/>
 </g>
</svg>
<div id="vd3" class="a"></div>
<div id="insp" class="a"></div>

<!-- INSPECTOR -->
<div class="a" style="left:1422px;top:78px;width:498px;height:1px;background:#a9a9a9"></div>
<svg class="a" style="left:1580px;top:57px" width="180" height="21">
 <g transform="translate(-1580,-57)">
  <path d="M1590.7 62.7 L1597 62.7 L1599.6 65.3 L1599.6 73.2 L1590.7 73.2 Z" fill="#fff" stroke="#333" stroke-width="1.4"/>
  <path d="M1596.5 63 L1596.5 65.8 L1599.3 65.8" fill="none" stroke="#333" stroke-width="1"/>
  <rect x="1619.3" y="62.3" width="11.6" height="11.4" rx="1.8" fill="#5a5a5a" stroke="#444" stroke-width=".6"/>
  <path d="M1621.5 66.5 Q1623 65 1625 66.5 Q1627 68 1629 66.3 M1621.5 70 Q1623 68.5 1625 70 Q1627 71.5 1629 69.8" fill="none" stroke="#fff" stroke-width="1.1"/>
  <rect x="1649.6" y="63.6" width="11" height="8.8" rx="1.2" fill="#fff" stroke="#444" stroke-width="1.3"/>
  <rect x="1650" y="66" width="10.3" height="1.2" fill="#444"/>
  <rect x="1651.5" y="68" width="3.5" height="3.2" fill="#444"/>
  <rect x="1656" y="68" width="3.5" height="1" fill="#444"/><rect x="1656" y="70.2" width="3.5" height="1" fill="#444"/>
  <path d="M1680.5 63 L1689.5 63 L1689.5 70 L1685 73.8 L1680.5 70 Z" fill="#2b71e6"/>
  <path d="M1679.5 65.5 L1677 67.2 L1679.5 69 Z M1690.5 65.5 L1693 67.2 L1690.5 69 Z" fill="#2b71e6"/>
  <ellipse cx="1678.6" cy="67.2" rx="1.6" ry="2" fill="#2b71e6"/><ellipse cx="1691.4" cy="67.2" rx="1.6" ry="2" fill="#2b71e6"/>
  <g transform="rotate(-25 1715 68)"><rect x="1708" y="65.8" width="14.5" height="4.6" fill="#fff" stroke="#3a3a3a" stroke-width="1.2"/>
  <path d="M1710.6 66 L1710.6 70.2 M1713.2 66 L1713.2 70.2 M1715.8 66 L1715.8 70.2 M1718.4 66 L1718.4 70.2 M1720.8 66 L1720.8 70.2" stroke="#3a3a3a" stroke-width=".9"/></g>
  <circle cx="1745" cy="68" r="6" fill="#5c5c5c"/>
  <path d="M1741.5 68 L1746.5 68" stroke="#fff" stroke-width="1.8"/>
  <path d="M1745.3 64.8 L1748.8 68 L1745.3 71.2 Z" fill="#fff"/>
 </g>
</svg>
<div class="t b" style="left:1428px;top:82px;font-size:11px;line-height:11px;color:#333">Button</div>
<div class="lb" style="top:105.3px">Type</div>
<div class="pop" style="top:102px"></div>
<div class="pt" style="left:1514px;top:105.5px">System</div>
<div class="hr" style="top:124px"></div>
<div class="lb" style="top:132.6px">State Config</div>
<div class="pop" style="top:129px;height:18px"></div>
<div class="lb" style="top:153.2px">Title</div>
<div class="pop" style="top:150px;height:18px"></div>
<div class="fld" style="left:1506px;top:171px;width:407px;height:19px"></div>
<div class="lb" style="top:198.5px">Font</div>
<div class="fld" style="left:1506px;top:194px;width:393px;height:19px;background:linear-gradient(#c9c9c9,#dedede 40%,#e6e6e6)"></div>
<div class="pt" style="left:1510px;top:198.6px">System 15.0</div>
<div class="lb" style="top:220.4px">Text Color</div>
<div class="pop" style="top:217px"></div>
<div class="pt" style="left:1553px;top:220.4px;font-size:12px;line-height:12px">Default</div>
<div class="lb" style="top:242.4px">Shadow Color</div>
<div class="pop" style="top:239px"></div>
<div class="pt" style="left:1553px;top:242.4px;font-size:12px;line-height:12px">Default</div>
<div class="lb" style="top:267.7px">Image</div>
<div class="fld" style="left:1506px;top:264px;width:407px;height:18px"></div>
<div class="pt" style="left:1510.5px;top:267.4px;color:#8a8a8a;font-size:11.8px;line-height:12px">Default Image</div>
<div class="lb" style="top:289.6px">Background</div>
<div class="fld" style="left:1506px;top:286px;width:407px;height:18px"></div>
<div class="pt" style="left:1510.5px;top:289.3px;color:#8a8a8a;font-size:11.8px;line-height:12px">Default Background Image</div>
<div class="hr" style="top:308px"></div>
<div class="lb" style="top:318.3px;font-size:10.6px">Shadow Offset</div>
<div class="fld" style="left:1508px;top:312px;width:186px;height:19px"></div>
<div class="fld" style="left:1713px;top:312px;width:186px;height:19px"></div>
<div class="pt" style="left:1672px;top:318.2px;width:18px;text-align:right">0,0</div>
<div class="pt" style="left:1877px;top:318.2px;width:18px;text-align:right">0,0</div>
<div class="ctr" style="left:1560px;width:80px;top:331.8px">Width</div>
<div class="ctr" style="left:1765px;width:80px;top:331.8px">Height</div>
<div class="chk" style="left:1506px;top:350px"></div>
<div class="ct" style="left:1523px;top:349.4px">Reverses On Highlight</div>
<div class="lb" style="top:368.5px">Drawing</div>
<div class="chk" style="left:1506px;top:368px"></div>
<div class="ct" style="left:1523px;top:367.7px">Shows Touch On Highlight</div>
<div class="chk on" style="left:1506px;top:386px"></div>
<div class="ct" style="left:1523px;top:385.4px">Highlighted Adjusts Image</div>
<div class="chk on" style="left:1506px;top:404px"></div>
<div class="ct" style="left:1523px;top:403.6px">Disabled Adjusts Image</div>
<div class="lb" style="top:424.5px">Line Break</div>
<div class="pop" style="top:421px"></div>
<div class="pt" style="left:1514px;top:424.4px">Truncate Middle</div>
<div class="hr" style="top:443px"></div>
<div class="lb" style="top:451.8px">Edge</div>
<div class="pop" style="top:448.5px"></div>
<div class="pt" style="left:1514px;top:451.8px">Content</div>
<div class="lb" style="top:473.9px">Inset</div>
<div class="fld" style="left:1506px;top:469px;width:187px;height:19px"></div>
<div class="fld" style="left:1713px;top:469px;width:188px;height:19px"></div>
<div class="pt" style="left:1670px;top:473.9px;width:18px;text-align:right">0</div>
<div class="pt" style="left:1877px;top:473.9px;width:18px;text-align:right">0</div>
<div class="ctr" style="left:1560px;width:80px;top:488.5px">Top</div>
<div class="ctr" style="left:1767px;width:80px;top:488.5px">Bottom</div>
<div class="fld" style="left:1506px;top:505px;width:187px;height:19px"></div>
<div class="fld" style="left:1713px;top:505px;width:188px;height:19px"></div>
<div class="pt" style="left:1670px;top:510.4px;width:18px;text-align:right">0</div>
<div class="pt" style="left:1877px;top:510.4px;width:18px;text-align:right">0</div>
<div class="ctr" style="left:1560px;width:80px;top:524.6px">Left</div>
<div class="ctr" style="left:1767px;width:80px;top:524.6px">Right</div>
<div class="a" style="left:1422px;top:553px;width:498px;height:1px;background:#c4c4c4"></div>
<div class="t b" style="left:1427px;top:557.6px;font-size:11px;line-height:11px;color:#333">Control</div>
<div class="lb" style="top:581.1px">Alignment</div>
<div class="ctr" style="left:1669px;width:80px;top:599.2px;font-size:12px">Horizontal</div>
<div class="ctr" style="left:1669px;width:80px;top:634.6px;font-size:12px">Vertical</div>
<div class="hr" style="top:646.5px"></div>
<div class="lb" style="top:653.2px">Content</div>
<div class="chk" style="left:1506px;top:653px"></div>
<div class="ct" style="left:1523px;top:652.5px">Selected</div>
<div class="chk on" style="left:1713px;top:653px"></div>
<div class="ct" style="left:1730px;top:652.5px">Enabled</div>
<div class="chk" style="left:1506px;top:671px"></div>
<div class="ct" style="left:1523px;top:670.7px">Highlighted</div>
<div class="a" style="left:1422px;top:699px;width:498px;height:1px;background:#c4c4c4"></div>
<div class="t b" style="left:1427px;top:703.5px;font-size:11px;line-height:11px;color:#333">View</div>
<div class="lb" style="top:726.9px">Mode</div>
<div class="pop" style="top:723px"></div>
<div class="pt" style="left:1514px;top:726.9px">Scale To Fill</div>
<svg class="a" style="left:0;top:0;pointer-events:none" width="1920" height="1080">
<defs><linearGradient id="stepg" x1="0" y1="0" x2="0" y2="1"><stop offset="0" stop-color="#fff"/><stop offset="1" stop-color="#e6e6e6"/></linearGradient>
<linearGradient id="segsel" x1="0" y1="0" x2="0" y2="1"><stop offset="0" stop-color="#d6e8fc"/><stop offset=".5" stop-color="#a9d0f6"/><stop offset="1" stop-color="#d4e9fc"/></linearGradient>
<linearGradient id="segg" x1="0" y1="0" x2="0" y2="1"><stop offset="0" stop-color="#fff"/><stop offset=".45" stop-color="#f8f8f8"/><stop offset=".55" stop-color="#ececec"/><stop offset="1" stop-color="#e9e9e9"/></linearGradient></defs>
<path d="M1900.5 109.8 L1903.2 106.5 L1905.9 109.8 Z M1900.5 112.2 L1903.2 115.5 L1905.9 112.2 Z" fill="#333"/>
<path d="M1900.5 136.8 L1903.2 133.5 L1905.9 136.8 Z M1900.5 139.2 L1903.2 142.5 L1905.9 139.2 Z" fill="#333"/>
<path d="M1900.5 157.8 L1903.2 154.5 L1905.9 157.8 Z M1900.5 160.2 L1903.2 163.5 L1905.9 160.2 Z" fill="#333"/>
<path d="M1900.5 224.8 L1903.2 221.5 L1905.9 224.8 Z M1900.5 227.2 L1903.2 230.5 L1905.9 227.2 Z" fill="#333"/>
<path d="M1900.5 246.60000000000002 L1903.2 243.3 L1905.9 246.60000000000002 Z M1900.5 249.0 L1903.2 252.3 L1905.9 249.0 Z" fill="#333"/>
<path d="M1900.5 428.8 L1903.2 425.5 L1905.9 428.8 Z M1900.5 431.2 L1903.2 434.5 L1905.9 431.2 Z" fill="#333"/>
<path d="M1900.5 456.3 L1903.2 453.0 L1905.9 456.3 Z M1900.5 458.7 L1903.2 462.0 L1905.9 458.7 Z" fill="#333"/>
<path d="M1900.5 730.8 L1903.2 727.5 L1905.9 730.8 Z M1900.5 733.2 L1903.2 736.5 L1905.9 733.2 Z" fill="#333"/>
<rect x="1902.5" y="194.5" width="10" height="18" rx="5" fill="url(#stepg)" stroke="#959595" stroke-width="1"/><line x1="1903.5" y1="203.5" x2="1911.5" y2="203.5" stroke="#d0d0d0" stroke-width=".6"/><path d="M1905.3 201.3 L1907.5 198.5 L1909.7 201.3 Z M1905.3 205.7 L1907.5 208.5 L1909.7 205.7 Z" fill="#444"/>
<rect x="1882.5" y="198.5" width="15" height="12" rx="2" fill="#e9e9e9" stroke="#777" stroke-width="1.3"/>
<path d="M1886 201.5 L1894 201.5 L1894 203.3 M1886 201.5 L1886 203.3 M1890 201.5 L1890 208.5 M1888.2 208.5 L1891.8 208.5" fill="none" stroke="#555" stroke-width="1.2"/>
<rect x="1514.5" y="222.5" width="27" height="7" fill="#2d87f7" stroke="#222" stroke-width="1"/>
<line x1="1547.5" y1="219.5" x2="1547.5" y2="233" stroke="#c8c8c8"/>
<rect x="1514.5" y="244.3" width="27" height="7" fill="#8c8c8c" stroke="#222" stroke-width="1"/>
<line x1="1547.5" y1="241.5" x2="1547.5" y2="255" stroke="#c8c8c8"/>
<rect x="1896.5" y="264.5" width="16" height="17" fill="#f4f4f4" stroke="#a9a9a9"/>
<path d="M1901 271 L1908.5 271 L1904.75 276 Z" fill="#333"/>
<rect x="1896.5" y="286.5" width="16" height="17" fill="#f4f4f4" stroke="#a9a9a9"/>
<path d="M1901 293 L1908.5 293 L1904.75 298 Z" fill="#333"/>
<rect x="1697.5" y="312.5" width="10" height="18" rx="5" fill="url(#stepg)" stroke="#959595" stroke-width="1"/><line x1="1698.5" y1="321.5" x2="1706.5" y2="321.5" stroke="#d0d0d0" stroke-width=".6"/><path d="M1700.3 319.3 L1702.5 316.5 L1704.7 319.3 Z M1700.3 323.7 L1702.5 326.5 L1704.7 323.7 Z" fill="#444"/>
<rect x="1902.5" y="312.5" width="10" height="18" rx="5" fill="url(#stepg)" stroke="#959595" stroke-width="1"/><line x1="1903.5" y1="321.5" x2="1911.5" y2="321.5" stroke="#d0d0d0" stroke-width=".6"/><path d="M1905.3 319.3 L1907.5 316.5 L1909.7 319.3 Z M1905.3 323.7 L1907.5 326.5 L1909.7 323.7 Z" fill="#444"/>
<rect x="1694.5" y="469.5" width="10" height="18" rx="5" fill="url(#stepg)" stroke="#959595" stroke-width="1"/><line x1="1695.5" y1="478.5" x2="1703.5" y2="478.5" stroke="#d0d0d0" stroke-width=".6"/><path d="M1697.3 476.3 L1699.5 473.5 L1701.7 476.3 Z M1697.3 480.7 L1699.5 483.5 L1701.7 480.7 Z" fill="#444"/>
<rect x="1902.5" y="469.5" width="10" height="18" rx="5" fill="url(#stepg)" stroke="#959595" stroke-width="1"/><line x1="1903.5" y1="478.5" x2="1911.5" y2="478.5" stroke="#d0d0d0" stroke-width=".6"/><path d="M1905.3 476.3 L1907.5 473.5 L1909.7 476.3 Z M1905.3 480.7 L1907.5 483.5 L1909.7 480.7 Z" fill="#444"/>
<rect x="1694.5" y="505.5" width="10" height="18" rx="5" fill="url(#stepg)" stroke="#959595" stroke-width="1"/><line x1="1695.5" y1="514.5" x2="1703.5" y2="514.5" stroke="#d0d0d0" stroke-width=".6"/><path d="M1697.3 512.3 L1699.5 509.5 L1701.7 512.3 Z M1697.3 516.7 L1699.5 519.5 L1701.7 516.7 Z" fill="#444"/>
<rect x="1902.5" y="505.5" width="10" height="18" rx="5" fill="url(#stepg)" stroke="#959595" stroke-width="1"/><line x1="1903.5" y1="514.5" x2="1911.5" y2="514.5" stroke="#d0d0d0" stroke-width=".6"/><path d="M1905.3 512.3 L1907.5 509.5 L1909.7 512.3 Z M1905.3 516.7 L1907.5 519.5 L1909.7 516.7 Z" fill="#444"/>
<path d="M1508.5 392 L1511 396 L1517.5 383.5" fill="none" stroke="#111" stroke-width="2.2" stroke-linejoin="round" stroke-linecap="round"/>
<path d="M1508.5 410 L1511 414 L1517.5 401.5" fill="none" stroke="#111" stroke-width="2.2" stroke-linejoin="round" stroke-linecap="round"/>
<path d="M1715.5 659 L1718 663 L1724.5 650.5" fill="none" stroke="#111" stroke-width="2.2" stroke-linejoin="round" stroke-linecap="round"/>
<rect x="1506.5" y="577.5" width="406" height="17" rx="4" fill="url(#segg)" stroke="#9a9a9a"/>
<rect x="1607.5" y="577.5" width="102" height="17" fill="url(#segsel)" stroke="#5d6fb8"/>
<line x1="1811.5" y1="580.0" x2="1811.5" y2="592.0" stroke="#c4c4c4"/>
<rect x="1552.7" y="581.0" width="10" height="10" fill="#fff" stroke="#333" stroke-width="1"/>
<rect x="1653.4" y="581.0" width="10" height="10" fill="#fff" stroke="#333" stroke-width="1"/>
<rect x="1755.2" y="581.0" width="10" height="10" fill="#fff" stroke="#333" stroke-width="1"/>
<rect x="1857.4" y="581.0" width="10" height="10" fill="#fff" stroke="#333" stroke-width="1"/>
<path d="M1552.7 579.0 L1552.7 593.0 M1658.4 579.0 L1658.4 593.0 M1765.2 579.0 L1765.2 593.0" stroke="#d02020" stroke-width="1.1"/>
<path d="M1859 586.0 L1866 586.0 M1860.5 584.2 L1858.6 586.0 L1860.5 587.8 M1864.5 584.2 L1866.4 586.0 L1864.5 587.8" fill="none" stroke="#e03030" stroke-width=".9"/>
<rect x="1506.5" y="612.5" width="406" height="17" rx="4" fill="url(#segg)" stroke="#9a9a9a"/>
<rect x="1607.5" y="612.5" width="102" height="17" fill="url(#segsel)" stroke="#5d6fb8"/>
<line x1="1811.5" y1="615.0" x2="1811.5" y2="627.0" stroke="#c4c4c4"/>
<rect x="1552.7" y="616.0" width="10" height="10" fill="#fff" stroke="#333" stroke-width="1"/>
<rect x="1653.4" y="616.0" width="10" height="10" fill="#fff" stroke="#333" stroke-width="1"/>
<rect x="1755.2" y="616.0" width="10" height="10" fill="#fff" stroke="#333" stroke-width="1"/>
<rect x="1857.4" y="616.0" width="10" height="10" fill="#fff" stroke="#333" stroke-width="1"/>
<path d="M1550.7 616.0 L1564.7 616.0 M1651.4 621.0 L1665.4 621.0 M1753.2 626.0 L1767.2 626.0" stroke="#d02020" stroke-width="1.1"/>
<path d="M1862.4 617.5 L1862.4 624.5 M1860.6 619.3 L1862.4 617.1 L1864.2 619.3 M1860.6 622.7 L1862.4 624.9 L1864.2 622.7" fill="none" stroke="#e03030" stroke-width=".9"/>
</svg>
<div class="a" style="left:1422px;top:745px;width:498px;height:10px;overflow:hidden">
 <div class="lb" style="left:0;top:4px">Tag</div>
 <div class="fld" style="left:84px;top:1px;width:395px;height:19px"></div>
 <div class="pt" style="left:465px;top:5.5px;width:12px;text-align:right">0</div>
 <div class="a" style="left:482px;top:0;width:11px;height:20px;border:1px solid #999;border-radius:5px;background:#f4f4f4"></div>
</div>

<!-- LIBRARY -->
<div class="a" style="left:1422px;top:755px;width:498px;height:325px;background:#fff"></div>
<div class="a" style="left:1422px;top:755px;width:498px;height:1px;background:#a8a8a8"></div>
<div class="a" style="left:1422px;top:777px;width:498px;height:1px;background:#b4b4b4"></div>
<svg class="a" style="left:1600px;top:756px" width="140" height="21">
 <g transform="translate(-1600,-756)">
  <path d="M1620.8 762.3 L1626.6 762.3 L1629.3 765 L1629.3 772.6 L1620.8 772.6 Z" fill="#fff" stroke="#333" stroke-width="1.4"/>
  <path d="M1626.2 762.6 L1626.2 765.4 L1629 765.4" fill="none" stroke="#333" stroke-width="1"/>
  <path d="M1652 762 Q1650.2 762 1650.2 763.8 L1650.2 766 Q1650.2 767.3 1649 767.3 Q1650.2 767.3 1650.2 768.6 L1650.2 771 Q1650.2 772.8 1652 772.8 M1658.2 762 Q1660 762 1660 763.8 L1660 766 Q1660 767.3 1661.2 767.3 Q1660 767.3 1660 768.6 L1660 771 Q1660 772.8 1658.2 772.8" fill="none" stroke="#333" stroke-width="1.3"/>
  <path d="M1685 761.8 L1690.6 764.4 L1690.6 770.6 L1685 773.4 L1679.4 770.6 L1679.4 764.4 Z" fill="#2a6fd6"/>
  <path d="M1679.4 764.4 L1685 767 L1690.6 764.4 L1685 761.8 Z" fill="#7fb2f4"/>
  <path d="M1685 767 L1685 773.4 L1690.6 770.6 L1690.6 764.4 Z" fill="#1f5cbc"/>
  <rect x="1709.5" y="762.5" width="11" height="10" fill="#555" stroke="#333" stroke-width="1"/>
  <rect x="1712" y="764.3" width="6" height="6.4" fill="#9a9a9a"/>
  <path d="M1710.5 763.8 L1710.5 771.8 M1719.5 763.8 L1719.5 771.8" stroke="#ddd" stroke-width=".9" stroke-dasharray="1 1"/>
 </g>
</svg>
<div class="a" style="left:1422px;top:778px;width:498px;height:62px;background:#e8e8e8;border-bottom:1px solid #c6c6c6"></div>
<div class="t b" style="left:1431px;top:801px;font-size:14px;line-height:14px;color:#2f78e8">Button</div>
<div class="lt" style="left:1482px;top:796px;width:430px;white-space:normal;line-height:13px"><b>Button</b> – Intercepts touch events and sends an action message to a target object when it's tapped.</div>
<div class="a" style="left:1431px;top:850px;width:44px;height:44px;background:#f1f1f1;border:1px solid #b3b3b3"></div>
<div class="t" style="left:1439px;top:867px;font-size:9.5px;line-height:10px;color:#4a86e8;letter-spacing:-.2px">Button</div>
<div class="lt" style="left:1482px;top:866px"><b>Bar Button Item</b> – Represents an item on a UIToolbar or UINavigationItem object.</div>
<div class="a" style="left:1426px;top:903px;width:490px;height:1px;background:#cfcfcf"></div>
<div class="a" style="left:1431px;top:913px;width:44px;height:44px;background:#f1f1f1;border:1px solid #b3b3b3"></div>
<div class="lt" style="left:1482px;top:922.5px;width:420px;white-space:normal"><b>Fixed Space Bar Button Item</b> – Represents a fixed space item on a UIToolbar object.</div>
<div class="a" style="left:1426px;top:966px;width:490px;height:1px;background:#cfcfcf"></div>
<div class="a" style="left:1431px;top:976px;width:44px;height:44px;background:#f1f1f1;border:1px solid #b3b3b3"></div>
<div class="lt" style="left:1482px;top:985.5px;width:430px;white-space:normal"><b>Flexible Space Bar Button Item</b> – Represents a flexible space item on a UIToolbar object.</div>
<div class="a" style="left:1426px;top:1029px;width:490px;height:1px;background:#cfcfcf"></div>
<svg class="a" style="left:1422px;top:900px" width="498" height="180">
 <g transform="translate(-1422,-900)">
  <path d="M1434.5 928 L1434.5 940 M1469.5 928 L1469.5 940" stroke="#2f78e8" stroke-width="2"/>
  <path d="M1437.5 934 L1467 934" stroke="#2f78e8" stroke-width="2" stroke-dasharray="1.3 1.6"/>
  <path d="M1432.5 998 L1438 993 L1438 1003 Z M1473 998 L1467.5 993 L1467.5 1003 Z" fill="#2f78e8"/>
  <path d="M1439 998 L1467 998" stroke="#2f78e8" stroke-width="2" stroke-dasharray="1.3 1.6"/>
  <rect x="1431" y="1065" width="3.8" height="3.8" fill="none" stroke="#444" stroke-width="1.1"/>
  <rect x="1437" y="1065" width="3.8" height="3.8" fill="none" stroke="#444" stroke-width="1.1"/>
  <rect x="1431" y="1071" width="3.8" height="3.8" fill="none" stroke="#444" stroke-width="1.1"/>
  <rect x="1437" y="1071" width="3.8" height="3.8" fill="none" stroke="#444" stroke-width="1.1"/>
  <rect x="1449" y="1060.5" width="464.5" height="19" rx="9.5" fill="#fff" stroke="#8c8c8c" stroke-width="1"/>
  <circle cx="1458.5" cy="1070" r="5" fill="#fff" stroke="#2a62c8" stroke-width="1.2"/>
  <path d="M1453.8 1069.5 A4.7 4.7 0 0 1 1463.2 1069.5 Z" fill="#2a62c8"/>
  <circle cx="1904.3" cy="1069.5" r="5.2" fill="#bdbdbd"/>
  <path d="M1902.2 1067.4 L1906.4 1071.6 M1906.4 1067.4 L1902.2 1071.6" stroke="#fff" stroke-width="1.4"/>
 </g>
</svg>
<div class="t" style="left:1472px;top:1064.4px;font-size:11.5px;line-height:11px">button</div>
<!-- MENU -->
<div class="a" style="left:1493px;top:126px;width:413px;height:72px;background:rgba(255,255,255,.985);border-radius:5px;box-shadow:0 3px 9px rgba(0,0,0,.32),0 0 0 .5px rgba(0,0,0,.12)"></div>
<div class="a" style="left:1493px;top:146px;width:413px;height:16px;background:linear-gradient(#6a8ff8,#4a71f3 60%,#2d53ee)"></div>
<div class="t" style="left:1498px;top:131.5px;font-size:12px">✓</div>
<div class="t" style="left:1514.5px;top:131.8px;font-size:12px;letter-spacing:.15px">Default</div>
<div class="t" style="left:1514.5px;top:148.6px;font-size:12px;color:#fff;letter-spacing:.3px">Highlighted</div>
<div class="t" style="left:1514.5px;top:164.6px;font-size:12px;letter-spacing:.3px">Selected</div>
<div class="t" style="left:1514.5px;top:180.5px;font-size:12px;letter-spacing:.3px">Disabled</div>
</body></html>
